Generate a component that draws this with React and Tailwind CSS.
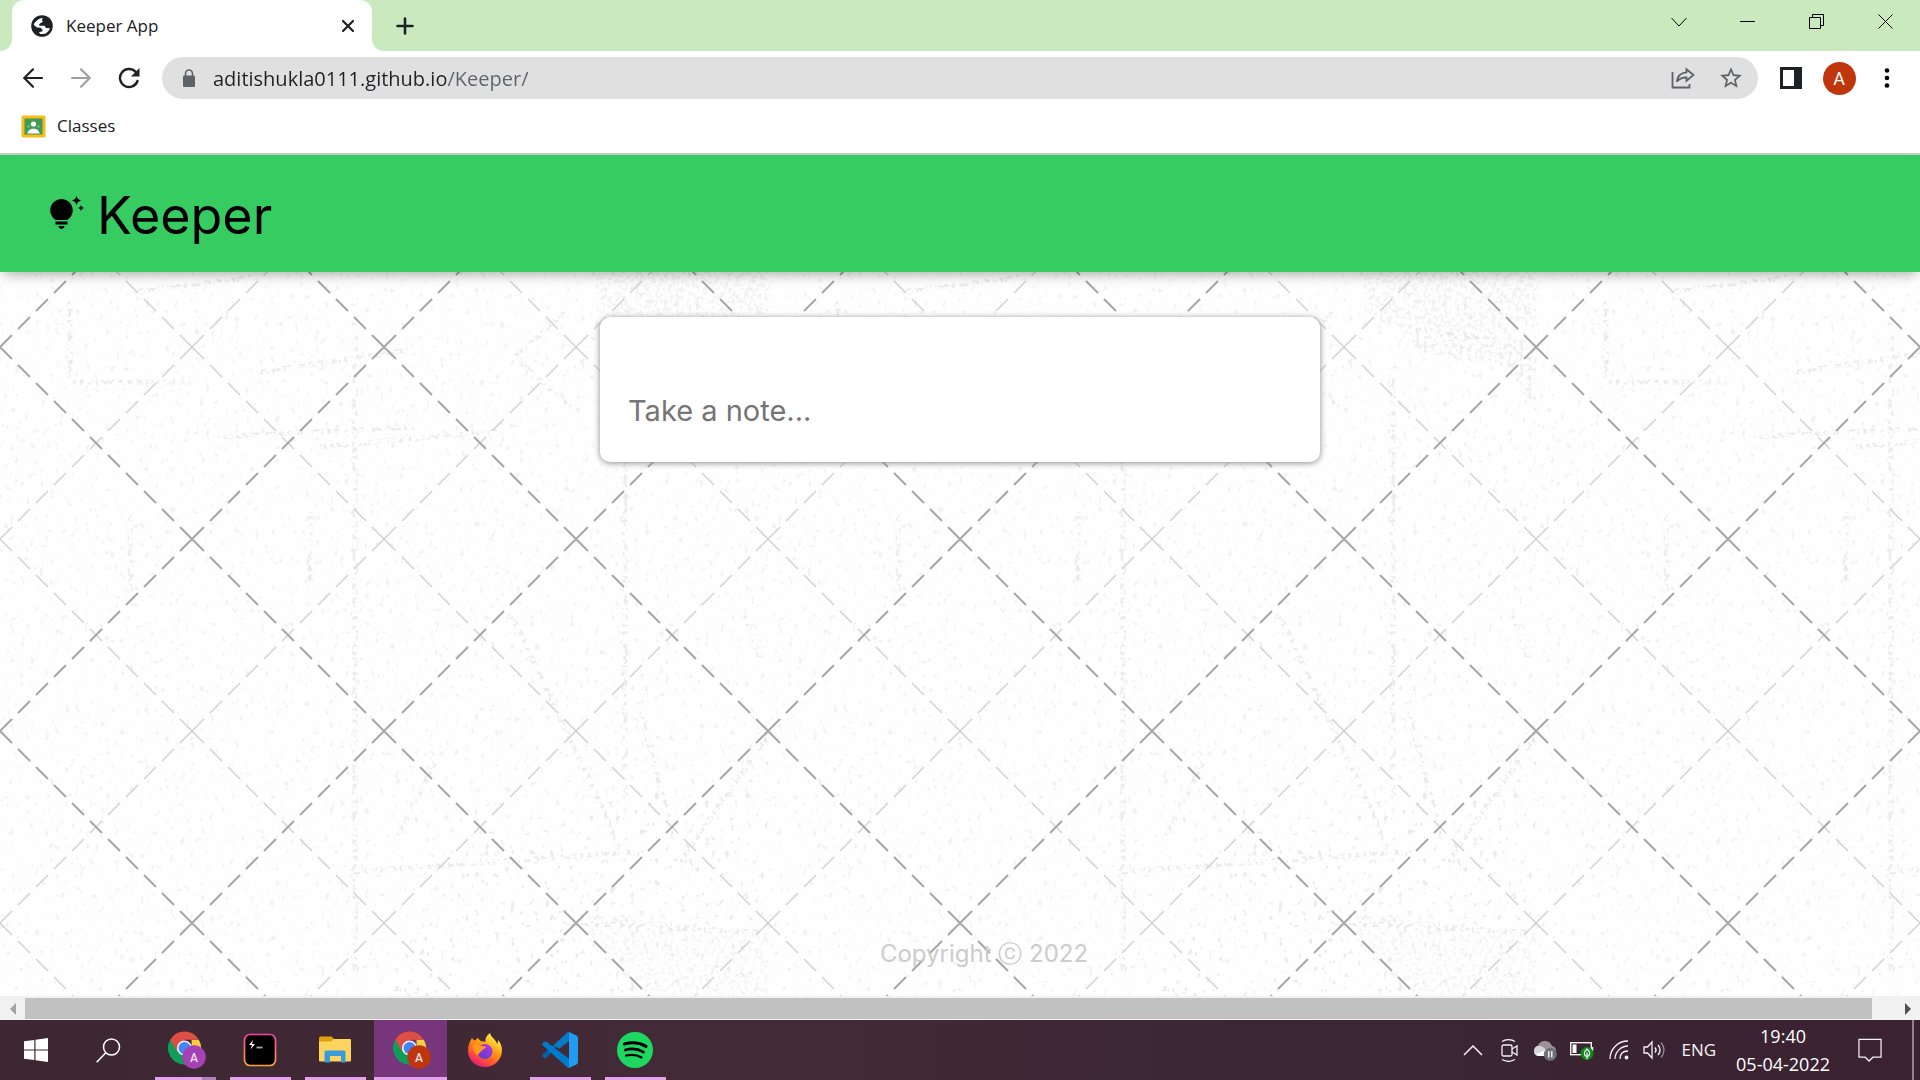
import React from "react";
import { MdStarOutline } from "react-icons/md";

const ui = "font-['Open_Sans','Noto_Sans',sans-serif]";
const display = "font-[Inter,'Open_Sans',sans-serif]";

function IconButton({ label, className = "", children }) {
  return (
    <button type="button" aria-label={label} className={`flex shrink-0 items-center justify-center ${className}`}>
      {children}
    </button>
  );
}

function GlobeIcon() {
  return (
    <svg width="22" height="22" viewBox="0 0 22 22" aria-hidden="true">
      <circle cx="11" cy="11" r="10.800" fill="#202124" />
      <path d="M5 6.500C7 4.500 9 3 11.500 2.800L11 5.500C12.500 6.500 11.500 7.500 9.500 8L8 9.500l.5 1.300h4.500c1.200 0 1.500 1.200 1.700 2.200l4.200.3c-.6 2.700-3 5-6 5.700L9.500 19c-1-.5-1.500-1.200-1.200-2l3-.5.2-2-2-1.700-3.500-.3L2.800 10C3 8.500 3.800 7.300 5 6.500z" fill="#fff" />
    </svg>
  );
}

function TabStrip() {
  return (
    <div className="flex h-[51px] items-stretch bg-[#cae9bf] text-[#202124]">
      <div className="flex w-3 items-end bg-white">
        <div className="h-full w-full rounded-br-xl bg-[#cae9bf]" />
      </div>
      <div className="bg-[#cae9bf]">
        <div className="flex h-full w-[360px] items-center rounded-t-xl bg-white pl-[19px] pr-3">
          <GlobeIcon />
          <span className="ml-[13px] flex-1 text-[17px] leading-6">Keeper App</span>
          <IconButton label="Close tab" className="size-6">
            <svg width="12" height="12" viewBox="0 0 12 12" stroke="currentColor" strokeWidth="2.200" strokeLinecap="round">
              <path d="M1 1l10 10M11 1L1 11" />
            </svg>
          </IconButton>
        </div>
      </div>
      <div className="w-3 bg-white">
        <div className="h-full w-full rounded-bl-xl bg-[#cae9bf]" />
      </div>
      <IconButton label="New tab" className="w-[42px]">
        <svg width="18" height="18" viewBox="0 0 18 18" stroke="currentColor" strokeWidth="2.600" strokeLinecap="round">
          <path d="M9 1.500v15M1.500 9h15" />
        </svg>
      </IconButton>
      <div className="flex-1" />
      <div className="flex h-[43px]">
        <IconButton label="Search tabs" className="w-[69px]">
          <svg width="16" height="10" viewBox="0 0 16 10" fill="none" stroke="#000">
            <path d="M.5 1L8 9l7.500-8" />
          </svg>
        </IconButton>
        <IconButton label="Minimize" className="w-[69px]">
          <svg width="15" height="1"><path d="M0 0h15v1H0z" /></svg>
        </IconButton>
        <IconButton label="Restore" className="w-[69px]">
          <svg width="15" height="15" viewBox="0 0 15 15" fill="none" stroke="#000">
            <path d="M.5 3.500h11v11H.5zM3.500 3V.5h11v11H12" />
          </svg>
        </IconButton>
        <IconButton label="Close window" className="w-[69px]">
          <svg width="15" height="15" viewBox="0 0 15 15" stroke="#000"><path d="M.5.5l14 14M14.500.5l-14 14" /></svg>
        </IconButton>
      </div>
    </div>
  );
}

function ArrowIcon({ flipped }) {
  return (
    <svg width="20" height="20" viewBox="0 0 20 20" fill="none" stroke="currentColor" strokeWidth="2.200" strokeLinecap="round" className={flipped ? "rotate-180" : ""}>
      <path d="M19 10H1.500M10 1.300L1.300 10l8.700 8.700" />
    </svg>
  );
}

function Toolbar() {
  return (
    <div className="flex h-[54px] items-center bg-white pl-[9px] pr-[9px] text-[#202124]">
      <IconButton label="Back" className="size-12"><ArrowIcon /></IconButton>
      <IconButton label="Forward" className="size-12 text-[#a0a0a0]"><ArrowIcon flipped /></IconButton>
      <IconButton label="Reload" className="size-12">
        <svg width="22" height="22" viewBox="0 0 22 22" fill="none" stroke="currentColor" strokeWidth="2.400" strokeLinecap="round">
          <path d="M19.500 14A9 9 0 1 1 17.600 4.900" /><path d="M21.500 1v8.500H13z" fill="currentColor" stroke="none" />
        </svg>
      </IconButton>
      <div className="mx-[9px] flex h-[42px] flex-1 items-center rounded-full bg-[#e0e0e0] pl-[21px] pr-[3px] text-[#5f6368]">
        <svg width="12" height="18" viewBox="0 0 12 18" aria-hidden="true">
          <path d="M1 6.500h10q1 0 1 1V17q0 1-1 1H1q-1 0-1-1V7.500q0-1 1-1z" fill="currentColor" />
          <path d="M2.500 7V4.500a3.500 3.500 0 0 1 7 0V7" fill="none" stroke="currentColor" strokeWidth="1.600" />
        </svg>
        <input
          aria-label="Address"
          defaultValue="aditishukla0111.github.io/Keeper/"
          className="ml-[18px] h-8 min-w-0 flex-1 bg-[linear-gradient(90deg,#202124_233px,#5f6368_233px)] bg-clip-text text-xl text-transparent outline-none"
        />
        <IconButton label="Share" className="size-12">
          <svg width="24" height="22" viewBox="0 0 24 22" fill="none" stroke="currentColor" strokeWidth="1.800">
            <path d="M1.500 5v15.500h17V17" />
            <path d="M15.500 2.200L22.500 8l-7 5.800v-3.300c-4.600-.1-7.600 1.300-9.700 4.300.6-5.500 4.200-9 9.700-9.500z" strokeLinejoin="miter" />
          </svg>
        </IconButton>
        <IconButton label="Bookmark this tab" className="size-12"><MdStarOutline size={26} /></IconButton>
      </div>
      <IconButton label="Side panel" className="size-12">
        <svg width="22" height="22"><path fill="#202124" fillRule="evenodd" d="M0 0h22v22H0zM3 3v16h11V3z" /></svg>
      </IconButton>
      <IconButton label="Profile" className="size-12">
        <span className="flex size-[33px] items-center justify-center rounded-full bg-[#bf360c] font-[Roboto,sans-serif] text-[18px] text-white">A</span>
      </IconButton>
      <IconButton label="Menu" className="size-12">
        <svg width="6" height="20" viewBox="0 0 6 20"><circle cx="3" cy="2.500" r="2.300" /><circle cx="3" cy="10" r="2.300" /><circle cx="3" cy="17.500" r="2.300" /></svg>
      </IconButton>
    </div>
  );
}

function BookmarkBar() {
  return (
    <div className="flex h-[50px] items-center border-b-2 border-[#cccccc] bg-white px-[21px] pb-[6px]">
      <a href="#classes" className="flex items-center gap-[11px] text-[17px] leading-6 text-[#202124]">
        <svg width="25" height="23" viewBox="0 0 25 23">
          <rect x=".5" y=".5" width="24" height="22" rx="1.500" fill="#f8bd16" />
          <rect x="3.500" y="3.500" width="18" height="16" fill="#439a56" />
          <circle cx="12.500" cy="9" r="2.600" fill="#fff" />
          <path d="M6.500 18.500c0-3 3-4.800 6-4.800s6 1.800 6 4.800z" fill="#fff" />
          <circle cx="7.500" cy="11.500" r="1.200" fill="#7dbb89" /><circle cx="17.500" cy="11.500" r="1.200" fill="#7dbb89" />
        </svg>
        Classes
      </a>
    </div>
  );
}

function Backdrop() {
  return (
    <svg aria-hidden="true" className="absolute inset-0 size-full">
      <defs>
        <pattern id="diamonds" width="384" height="384" patternUnits="userSpaceOnUse" y="192">
          <g strokeDasharray="16.970 8.485" fill="none">
            <path stroke="#d2d2d2" strokeWidth="1.500" d="M192 0L384 192M192 0L0 192M0 192L192 384M384 192L192 384" />
            <path stroke="#a6a6a6" strokeWidth="2" d="M0 0L192 192M192 192L384 384M384 0L192 192M192 192L0 384" />
          </g>
        </pattern>
        <filter id="grain" x="0" y="0" width="100%" height="100%">
          <feTurbulence type="fractalNoise" baseFrequency="0.2 0.14" numOctaves="4" seed="7" />
          <feColorMatrix values="0 0 0 0 .78  0 0 0 0 .78  0 0 0 0 .78  10 0 0 0 -6.600" result="specks" />
          <feComposite in="specks" in2="SourceAlpha" operator="in" />
        </filter>
        <filter id="scratch" x="0" y="0" width="100%" height="100%">
          <feTurbulence type="fractalNoise" baseFrequency="0.25" numOctaves="3" seed="3" />
          <feColorMatrix values="0 0 0 0 .76  0 0 0 0 .76  0 0 0 0 .76  9 0 0 0 -4.600" result="specks" />
          <feComposite in="specks" in2="SourceAlpha" operator="in" />
        </filter>
        <pattern id="grunge" width="768" height="768" patternUnits="userSpaceOnUse" y="117">
          <g filter="url(#grain)">
            <rect width="768" height="768" fillOpacity=".5" />
            <path d="M480 560l288-70v278H350z" fillOpacity=".5" />
          </g>
          <g filter="url(#scratch)">
            <rect width="768" height="768" fillOpacity="0" />
            <path d="M590 0h178v55l-70 15-90-20z" fillOpacity=".4" />
            <path d="M640 55l128 15v70l-30-45-90-15z" fillOpacity=".5" />
            <path d="M560 640l208 20v100l-120-30z" fillOpacity=".25" />
            <g fill="none" stroke="#000" strokeWidth="5" strokeOpacity=".65">
              <path d="M320 175l180-16M355 60v640M130 240v80M310 240v70M70 30v80h120M520 90l50 45M515 85l50-45M742 335l18 50M510 340l90 190 20 50M640 440l30 110M770 460l-90 130M440 480l-45 90M350 600l280-20M560 650l200 10M130 20l130-16M260 100l150-22M215 165l200-10M625 100v440" />
            </g>
          </g>
        </pattern>
      </defs>
      <rect width="100%" height="100%" fill="url(#grunge)" />
      <rect width="100%" height="100%" fill="url(#diamonds)" />
    </svg>
  );
}

function Page() {
  return (
    <div className="relative isolate flex flex-1 flex-col bg-[#fefefe]">
      <div className="absolute inset-0 -z-10 overflow-hidden"><Backdrop /></div>
      <header className="flex h-[117px] items-center bg-[#37cc61] px-12 shadow-[0_6px_12px_-4px_rgba(0,0,0,0.35)]">
        <svg width="36" height="36" viewBox="0 0 24 24" aria-hidden="true">
          <path d="M7 20h4c0 1.100-.9 2-2 2s-2-.9-2-2zm-2-1h8v-2H5v2zm11.500-9.500c0 3.820-2.660 5.860-3.770 6.500H5.270c-1.110-.64-3.770-2.680-3.770-6.500C1.500 5.360 4.860 2 9 2s7.500 3.360 7.500 7.500zm4.870-2.130L20 8l1.370.63L22 10l.63-1.370L24 8l-1.370-.63L22 6l-.63 1.370zM19 6l.94-2.060L22 3l-2.060-.94L19 0l-.94 2.060L16 3l2.060.94L19 6z" />
        </svg>
        <h1 className={`ml-[13px] pt-1 text-[52px] leading-[60px] text-black ${display}`}>Keeper</h1>
      </header>
      <main className="flex-1 px-8 pt-[45px]">
        <form className="mx-auto w-full max-w-[720px] rounded-[10px] bg-white px-7 pb-[31px] pt-[74px] shadow-[0_1px_6px_rgb(138,137,137)]">
          <textarea
            aria-label="Note"
            rows={1}
            placeholder="Take a note..."
            className={`block h-10 w-full resize-none overflow-hidden bg-transparent text-[29px] leading-10 outline-none placeholder:text-[#757575] ${display}`}
          />
        </form>
      </main>
      <footer className={`pb-6 pl-12 text-center text-2xl leading-9 text-[#cccccc] ${display}`}>
        <p>Copyright ⓒ 2022</p>
      </footer>
    </div>
  );
}

function ScrollBar() {
  return (
    <div className="flex h-6 items-center bg-[#f1f1f1] pt-px">
      <IconButton label="Scroll left" className="w-[25px]">
        <svg width="6" height="12" fill="#a3a3a3"><path d="M6 0v12L0 6z" /></svg>
      </IconButton>
      <div className="flex-1 pr-[23px]"><div className="h-[21px] bg-[#c1c1c1]" /></div>
      <IconButton label="Scroll right" className="w-[25px]">
        <svg width="6" height="12" fill="#505050"><path d="M0 0v12l6-6z" /></svg>
      </IconButton>
    </div>
  );
}

function ChromeIcon({ badge }) {
  return (
    <svg width="38" height="38" viewBox="-2 0 38 38" overflow="visible">
      <path d="M2.210 8.750A16.500 16.500 0 0 0 16.500 33.500L23.600 21.100 16.500 17z" fill="#0f9d58" />
      <path d="M30.800 8.750A16.500 16.500 0 0 1 16.500 33.500L23.600 21.100V8.750z" fill="#ffcd40" />
      <path d="M2.210 8.750A16.500 16.500 0 0 1 30.790 8.750H16.500L9.400 21.100z" fill="#dd4f43" />
      <circle cx="16.500" cy="17" r="7.600" fill="#f1f1f1" />
      <circle cx="16.500" cy="17" r="6" fill="#4285f4" />
      <circle cx="26" cy="26" r="11.800" fill={badge} />
      <text x="26" y="30.500" textAnchor="middle" fontFamily="Roboto, sans-serif" fontSize="12" fontWeight="500" fill="#f3dcec">A</text>
    </svg>
  );
}

function HyperIcon() {
  return (
    <svg width="34" height="34" viewBox="0 0 34 34">
      <defs>
        <linearGradient id="hy" x1="0" y1="0" x2="0" y2="1"><stop offset="0" stopColor="#f83fa5" /><stop offset="1" stopColor="#f9a826" /></linearGradient>
      </defs>
      <rect x="1.500" y="1.500" width="31" height="31" rx="5.500" fill="#000" stroke="url(#hy)" strokeWidth="1.700" />
      <path d="M10 7l-4 5h3l-1.500 4.500L12 11H9z" fill="#fff" />
      <path d="M13.500 14.500h6" stroke="#aaa" strokeWidth="1.800" />
    </svg>
  );
}

function FolderIcon() {
  return (
    <svg width="32" height="28" viewBox="0 0 32 28">
      <path d="M0 2q0-1.500 1.500-1.500h11L15 3v4H0z" fill="#e2a008" />
      <path d="M0 5.500h12l3-2.500h16q1 0 1 1v20.500q0 1-1 1H1q-1 0-1-1z" fill="#ffd45e" />
      <path d="M5.500 26.500V16q0-1.500 1.500-1.500h18q1.500 0 1.500 1.500v10.500H22V20H11v6.500z" fill="#3a9bdc" />
    </svg>
  );
}

function FirefoxIcon() {
  return (
    <svg width="36" height="36" viewBox="0 0 36 36">
      <defs>
        <linearGradient id="ff" x1=".85" y1="0" x2=".25" y2="1"><stop offset=".1" stopColor="#fff04a" /><stop offset=".45" stopColor="#ff980e" /><stop offset=".75" stopColor="#ff4b3a" /><stop offset="1" stopColor="#e31587" /></linearGradient>
        <linearGradient id="fp" x1=".7" y1="0" x2=".3" y2="1"><stop offset="0" stopColor="#b833e1" /><stop offset="1" stopColor="#5a3fd0" /></linearGradient>
      </defs>
      <path d="M23 1c-4 3-5 6-4.500 9-1.500-.8-3-1-4.500-.8C12.500 8 11.500 7 11 6 9.800 6.500 9 7.500 8.500 8.500 7 8.300 6 7.500 5 6 3 9 1 13 1 18.500 1 28 8.500 35 18 35s17-7.500 17-17c0-4-2-8-4-10 0 2-.2 3-1 4C29 7 24 6 23 1z" fill="url(#ff)" />
      <circle cx="18" cy="19.500" r="7.500" fill="url(#fp)" />
      <path d="M6 13c3-1.500 6-1 8 1 2 .5 4 0 5 1-1 2-4 2.500-5 4.500-1.500 2-3 2-3.500 4C7 21 5 17 6 13z" fill="#ff9a1c" />
    </svg>
  );
}

function CodeIcon() {
  return (
    <svg width="36" height="36" viewBox="0 0 36 36">
      <path d="M27 0L4.500 25.700Q3.500 27 2 26L.6 24.800Q-.3 23.600.8 22.400L25 0.800z" fill="#0065a9" />
      <path d="M.8 13.600Q-.3 12.400.6 11.200L2 10q1.500-1 2.800 0L27 26.800v9.200q-1 0-2-1z" fill="#007acc" />
      <path d="M27 0l7.500 3.600Q36 4.300 36 6v24q0 1.700-1.500 2.400L27 36z" fill="#1f9cf0" />
      <path d="M25 1l2-1v9L17 17l-5-4z" fill="#0a78c2" />
    </svg>
  );
}

function SpotifyIcon() {
  return (
    <svg width="36" height="36" viewBox="0 0 36 36" fill="none" stroke="#000" strokeLinecap="round">
      <circle cx="18" cy="18" r="18" fill="#1ed760" stroke="none" />
      <path d="M7.500 12c7-2 15.500-1.200 21.500 2.300" strokeWidth="3.200" />
      <path d="M8.300 18c6-1.700 13-1 18.300 2.100" strokeWidth="2.700" />
      <path d="M9 23.500c5.500-1.200 11-.7 15.500 2" strokeWidth="2.200" />
    </svg>
  );
}

const apps = [
  { name: "Chrome", icon: <ChromeIcon badge="#a341b5" />, open: true, stacked: true },
  { name: "Hyper", icon: <HyperIcon />, open: true },
  { name: "File Explorer", icon: <FolderIcon />, open: true },
  { name: "Chrome, Keeper App", icon: <ChromeIcon badge="#bf360c" />, open: true, active: true },
  { name: "Firefox", icon: <FirefoxIcon /> },
  { name: "Visual Studio Code", icon: <CodeIcon />, open: true },
  { name: "Spotify", icon: <SpotifyIcon />, open: true },
];

function AppButton({ name, icon, open, active, stacked }) {
  return (
    <button type="button" aria-label={name} className="flex h-full w-[75px] shrink-0 flex-col items-center">
      <span className={`flex w-[73px] flex-1 items-center justify-center pr-[2px] pt-[3px] ${active ? "bg-[#77357b]" : ""}`}>{icon}</span>
      <span className={`flex h-[3px] ${active ? "w-[73px]" : "w-[61px]"} ${open ? "bg-[#e5a0ee]" : ""}`}>
        {stacked && <span className="ml-auto w-[14px] bg-[#b37cba]" />}
      </span>
    </button>
  );
}

function Tray() {
  return (
    <div className="flex h-full items-center text-[#f4f1f3]">
      <IconButton label="Show hidden icons" className="mr-[18px] w-5">
        <svg width="20" height="11" viewBox="0 0 20 11" fill="none" stroke="currentColor" strokeWidth="1.500"><path d="M1 10l9-9 9 9" /></svg>
      </IconButton>
      <IconButton label="Meet now" className="w-[17px]">
        <svg width="17" height="23" viewBox="0 0 17 23" fill="none" stroke="currentColor" strokeWidth="1.300">
          <rect x="1" y="6" width="10" height="11" rx="1.500" /><path d="M11 10l5-3v9l-5-3M1 2.500c4-2.300 9-2.300 13 0M1 20.500c4 2.300 9 2.300 13 0" />
        </svg>
      </IconButton>
      <IconButton label="OneDrive" className="ml-[15px] w-6">
        <svg width="24" height="22" viewBox="0 0 24 22">
          <path d="M5 16a5 5 0 0 1 0-9.500A7.500 7.500 0 0 1 19 7a4.700 4.700 0 0 1 1 9z" fill="#9b9299" />
          <path d="M5 17a5 5 0 0 1 1-9.900c3 0 5 1.500 7 4l4 5.900z" fill="#d8d3d7" /><path d="M2 15.500L13 11l4 6H5z" fill="#fff" />
          <circle cx="17.300" cy="15.300" r="6.500" fill="#6f7274" /><path d="M15.800 12v6.500M18.800 12v6.500" stroke="#fff" strokeWidth="1.300" />
        </svg>
      </IconButton>
      <IconButton label="Battery" className="ml-[13px] w-6">
        <svg width="24" height="20" viewBox="0 0 24 20" fill="none">
          <rect x=".7" y="2.700" width="20.600" height="12" stroke="currentColor" strokeWidth="1.400" /><path d="M22.500 7v4" stroke="currentColor" strokeWidth="1.500" /><path d="M2.500 4.500h4v8.500h-4z" fill="#fff" />
          <circle cx="17" cy="13.500" r="6.500" fill="#0e8a16" /><path d="M17 9c3.500 3 3.500 6 0 8-3.500-2-3.500-5 0-8zM17 12.500v6.500" stroke="#fff" strokeWidth="1.200" />
        </svg>
      </IconButton>
      <IconButton label="Wi-Fi" className="ml-[15px] w-5">
        <svg width="20" height="20" viewBox="0 0 20 20" fill="none" stroke="currentColor" strokeWidth="1.300">
          <path d="M1 19C1 9 9 1 19 1M6 19C6 12 12 6 19 6M11 19c0-5 3-8 8-8" /><circle cx="17.500" cy="17.500" r="1.300" fill="currentColor" />
        </svg>
      </IconButton>
      <IconButton label="Volume" className="ml-[14px] w-[23px]">
        <svg width="23" height="20" viewBox="0 0 23 20" fill="none" stroke="currentColor" strokeWidth="1.300">
          <path d="M1 7v6h3.500L9 18V2L4.500 7zM12 7.500c1.300 1.500 1.300 3.500 0 5M15 5c2.500 3 2.500 7 0 10" /><path d="M18 2.500c4 4.500 4 10.500 0 15" opacity=".5" />
        </svg>
      </IconButton>
      <button type="button" className="ml-[15px] text-[17px]">ENG</button>
      <button type="button" className="ml-5 flex flex-col items-center text-[18px] leading-7 text-white"><span>19:40</span><span>05-04-2022</span></button>
      <IconButton label="Notifications" className="ml-7 w-6">
        <svg width="25" height="25" viewBox="0 0 25 25" fill="none" stroke="currentColor" strokeWidth="1.300"><path d="M1 1h23v18.500h-8.500l-4 4-4-4H1z" /></svg>
      </IconButton>
      <div className="ml-[30px] mr-[6px] h-full w-[2px] bg-[#8f828c]" />
    </div>
  );
}

function Taskbar() {
  return (
    <div className="flex h-[60px] items-center justify-between bg-[linear-gradient(90deg,#3d2733,#422b36_40%,#3a2634_70%,#3b2230)]">
      <div className="flex h-full items-center">
        <IconButton label="Start" className="w-[72px]">
          <svg width="24" height="24" viewBox="0 0 24 24" fill="#fff"><path d="M0 3.300l10.300-1.400v9.600H0zM11.500 1.700L24 0v11.500H11.500zM0 12.500h10.300v9.600L0 20.700zM11.500 12.500H24V24l-12.500-1.700z" /></svg>
        </IconButton>
        <IconButton label="Search" className="mr-1 w-[72px]">
          <svg width="25" height="25" viewBox="0 0 25 25" fill="none" stroke="#fff" strokeWidth="1.500"><circle cx="15.500" cy="9" r="8" /><path d="M9.800 14.800L.7 24.300" /></svg>
        </IconButton>
        {apps.map((app) => <AppButton key={app.name} {...app} />)}
      </div>
      <Tray />
    </div>
  );
}

export default function App() {
  return (
    <div className={`flex min-h-screen flex-col bg-white ${ui}`}>
      <TabStrip />
      <Toolbar />
      <BookmarkBar />
      <Page />
      <ScrollBar />
      <Taskbar />
    </div>
  );
}
